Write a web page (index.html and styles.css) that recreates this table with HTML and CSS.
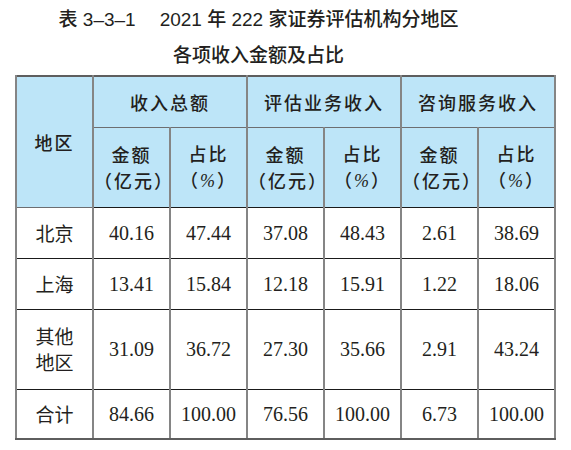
FILE: index.html
```
<!DOCTYPE html>
<html lang="zh-CN">
<head>
  <meta charset="UTF-8" />
  <title>证券评估机构分地区收入</title>
  <link rel="stylesheet" href="styles.css">
</head>
<body>
  <div class="page">
    <div class="title">
      <p>表 3–3–1<span class="gap"></span>2021 年 222 家证券评估机构分地区</p>
      <p>各项收入金额及占比</p>
    </div>

    <table class="data">
      <colgroup>
        <col><col><col><col><col><col><col>
      </colgroup>
      <thead>
        <tr class="h1">
          <th rowspan="2">地区</th>
          <th colspan="2">收入总额</th>
          <th colspan="2">评估业务收入</th>
          <th colspan="2">咨询服务收入</th>
        </tr>
        <tr class="h2">
          <th>金额<br>（亿元）</th>
          <th>占比<br>（<span class="pct">%</span>）</th>
          <th>金额<br>（亿元）</th>
          <th>占比<br>（<span class="pct">%</span>）</th>
          <th>金额<br>（亿元）</th>
          <th>占比<br>（<span class="pct">%</span>）</th>
        </tr>
      </thead>
      <tbody>
        <tr class="r51">
          <td class="area">北京</td>
          <td>40.16</td><td>47.44</td><td>37.08</td><td>48.43</td><td>2.61</td><td>38.69</td>
        </tr>
        <tr class="r51">
          <td class="area">上海</td>
          <td>13.41</td><td>15.84</td><td>12.18</td><td>15.91</td><td>1.22</td><td>18.06</td>
        </tr>
        <tr class="r80">
          <td class="area">其他<br>地区</td>
          <td>31.09</td><td>36.72</td><td>27.30</td><td>35.66</td><td>2.91</td><td>43.24</td>
        </tr>
        <tr class="r50">
          <td class="area">合计</td>
          <td>84.66</td><td>100.00</td><td>76.56</td><td>100.00</td><td>6.73</td><td>100.00</td>
        </tr>
      </tbody>
    </table>
  </div>
</body>
</html>
```

FILE: styles.css
```
* {
  margin: 0;
  padding: 0;
  box-sizing: border-box;
}

body {
  background: #fff;
  color: #231f20;
  font-family: "Liberation Sans", "Noto Sans CJK SC", sans-serif;
}

.page {
  padding: 2px 15px 0 15px;
}

.title {
  padding-right: 54px;
  text-align: center;
  font-size: 19px;
  line-height: 36px;
  font-weight: 500;
  color: #231f20;
}

.title .gap {
  display: inline-block;
  width: 24px;
}

.data {
  margin-top: 1px;
  width: 541px;
  table-layout: fixed;
  border-collapse: collapse;
  border: 2px solid #5e5e5e;
}

.data col {
  width: 77px;
}

.data th,
.data td {
  text-align: center;
  vertical-align: middle;
  border-left: 2px solid #858585;
  border-right: 2px solid #858585;
}

.data th {
  background: #bde5f8;
  font-family: "Noto Sans CJK SC", sans-serif;
  font-weight: 500;
  font-size: 18px;
  letter-spacing: 2px;
  line-height: 26px;
}

.h1 th {
  border-bottom: 1px solid #6d6e71;
}

.h1 {
  height: 51px;
}

.h2 {
  height: 80px;
}

.h2 th {
  border-bottom: 1px solid #1a1a1a;
}

.pct {
  font-family: "Liberation Serif", serif;
  font-style: italic;
  font-weight: 400;
}

.data td {
  font-family: "Liberation Serif", serif;
  font-size: 20px;
  line-height: 26px;
  border-bottom: 1px solid #1a1a1a;
}

.data td.area {
  font-family: "Noto Sans CJK SC", sans-serif;
  font-weight: 400;
  font-size: 19px;
}

.r51 {
  height: 51px;
}

.r80 {
  height: 80px;
}

.r50 {
  height: 50px;
}

.data tbody tr:last-child td {
  border-bottom: 2px solid #5e5e5e;
}
```
